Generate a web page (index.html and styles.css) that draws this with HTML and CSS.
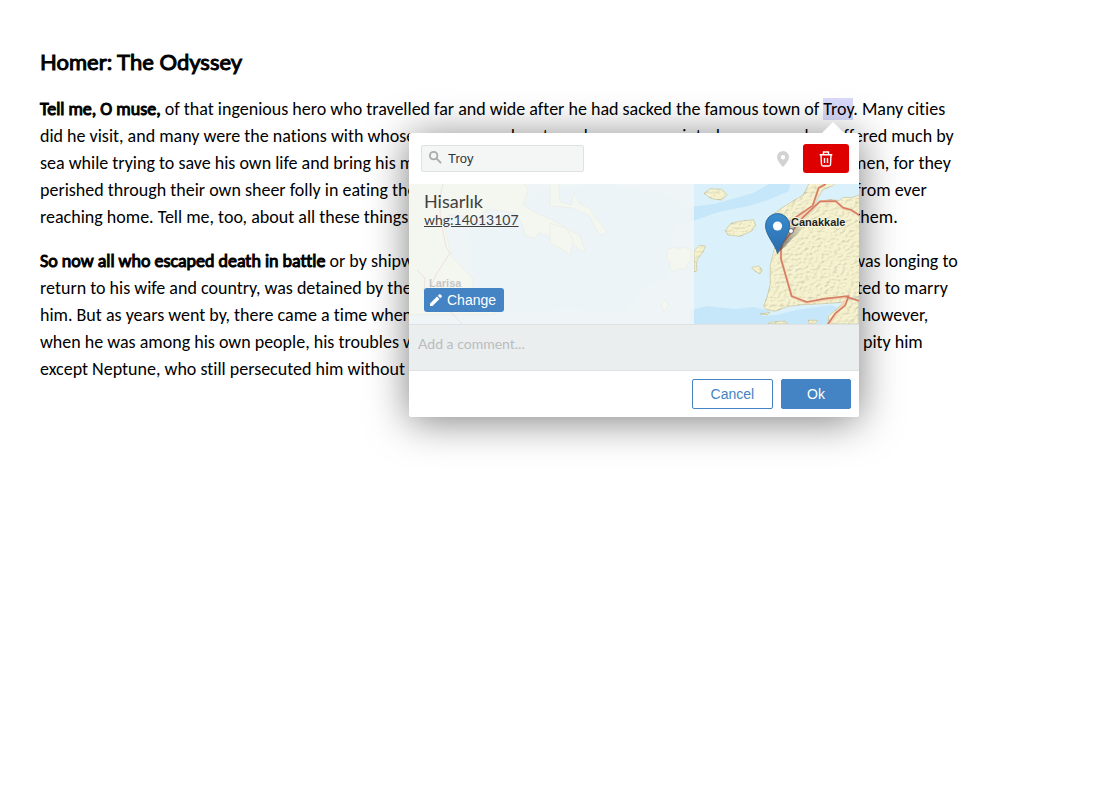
FILE: index.html
```html
<!DOCTYPE html>
<html lang="en">
<head>
<meta charset="utf-8">
<title>Homer: The Odyssey</title>
<link rel="stylesheet" href="styles.css">
</head>
<body>
<main class="page">
  <article class="content">
    <h1>Homer: The Odyssey</h1>
    <p><strong>Tell me, O muse,</strong> of that ingenious hero who travelled far and wide after he had sacked the famous town of <span class="annotation">Troy</span>. Many cities did he visit, and many were the nations with whose manners and customs he was acquainted; moreover he suffered much by sea while trying to save his own life and bring his men safely home; but do what he might he could not save his men, for they perished through their own sheer folly in eating the cattle of the Sun-god Hyperion; so the god prevented them from ever reaching home. Tell me, too, about all these things, O daughter of Jove, from whatsoever source you may know them.</p>
    <p><strong>So now all who escaped death in battle</strong> or by shipwreck had got safely home except Ulysses, and he, though he was longing to return to his wife and country, was detained by the goddess Calypso, who had got him into a large cave and wanted to marry him. But as years went by, there came a time when the gods settled that he should go back to Ithaca; even then, however, when he was among his own people, his troubles were not yet over; nevertheless all the gods had now begun to pity him except Neptune, who still persecuted him without ceasing and would not let him get home.</p>
  </article>

  <section class="editor" aria-label="Annotation editor">
    <header class="toolbar">
      <div class="search">
        <svg class="search-icon" viewBox="0 0 14 14" aria-hidden="true"><circle cx="5" cy="5" r="4"/><path d="M8 8l5 5"/></svg>
        <input type="text" value="Troy" aria-label="Search place">
      </div>
      <div class="tools">
        <button type="button" class="pin-btn" aria-label="Place">
          <svg viewBox="0 0 12 16" aria-hidden="true"><path fill-rule="evenodd" d="M6 0a6 6 0 0 0-6 6c0 4 6 10 6 10s6-6 6-10a6 6 0 0 0-6-6zm0 4a2.200 2.200 0 1 1 0 4.400 2.200 2.200 0 0 1 0-4.400z"/></svg>
        </button>
        <button type="button" class="delete-btn" aria-label="Delete">
          <svg viewBox="0 0 14 16" aria-hidden="true"><path d="M.7 3.700h12.600M4.500 3.500V1h5v2.500M2 3.900l.5 9.600q.1 1.500 1.600 1.500h5.800q1.500 0 1.600-1.500l.5-9.600M5.500 7v5M8.500 7v5"/></svg>
        </button>
      </div>
    </header>

    <div class="place">
      <svg class="map" viewBox="0 0 450 140" preserveAspectRatio="xMaxYMid slice" role="img" aria-label="Map of the northern Aegean">
        <defs>
          <linearGradient id="marker" x1="0" y1="0" x2="0" y2="1"><stop offset="0" stop-color="#398bcd"/><stop offset="1" stop-color="#2a6cac"/></linearGradient>
          <linearGradient id="shade" x1="0" y1="1" x2="1" y2="0"><stop offset="0" stop-color="#333" stop-opacity=".65"/><stop offset="1" stop-color="#333" stop-opacity="0"/></linearGradient>
          <filter id="relief" x="0" y="0" width="1" height="1" color-interpolation-filters="sRGB">
            <feTurbulence type="fractalNoise" baseFrequency=".08 .13" numOctaves="3" seed="8" result="noise"/>
            <feDiffuseLighting in="noise" surfaceScale="1.800" diffuseConstant="1.090" lighting-color="#fffef4" result="light"><feDistantLight azimuth="220" elevation="66"/></feDiffuseLighting>
            <feComposite in="light" in2="SourceAlpha" operator="in" result="cut"/>
            <feBlend in="SourceGraphic" in2="cut" mode="multiply"/>
          </filter>
        </defs>
        <rect width="450" height="140" fill="#daf1fb"/>
        <path fill="#c6e7f9" d="M281 23l24-3 39-11 20-11 18-3-2 12-18 8-22 7-30 6-29 10z"/>
        <path fill="#d0ebf8" d="M60 35l40-5 35-25 60-5 60 10 26 17v12l-16 3-4 50-25 10-20 28-60-5-40 5-50-5z"/>
        <path fill="#c6e7f9" d="M281 126l17-4 28 3 18-2 17 4-8 5 14-1 20-5 35-5 10 4-8 15H281z"/>
        <g class="land" transform="translate(-9 -4) scale(.3333)">
          <path d="M20 0H365l20 30-15 45 40 25 50 20 35 22 45 25 17 48-20-4-25-30-50-5-45-18-12 18-30-10-4-24-25-42-45-8-38-4-24 20 10 20-30-5-30-15-40-5-18 18 5 30 10 40 10 40 60 60 5 35 30 30 15 28 14 12 5 8H20z"/>
        </g>
        <g class="land" transform="translate(141 -4) scale(.3333)">
          <path d="M0 0h25l5 65 35 10 5-38 20 35 28 12 20 30 32 38-15 15-18-20-18-38-52-25L0 78zM0 130l50 15 20 35-10 48-15-15L0 190zM354 208l20-6 14 5 18-6 16 8 3 28-10 12-8 20-20-3-14 9-16-12 4-18-12-10z"/><path d="M332 372l15-13 10 17-16 20z"/>
        </g>
        <g transform="translate(281 -4) scale(.3333)">
          <g class="land" filter="url(#relief)">
            <path d="M42 40l18-14 35 2 17 16-18 16-30-4zM105 152l18-22 30-7 38-4 6 16-12 18-35 16-36-4zM12 212l16-16 18 2-6 17-16 20-5 17 2 20-9 4zM185 262l22-4 10 12-7 12-15-8zM253 100l22-16 27-17 38-22 22-45h82l-14 16-32 14-16 28-12 26-36 26-32 14-35-14zM298 152l46-38 29-26 20-24 27-6 26 4 15-10 24 1 27-10v306l-26 3-30 15-70 5-49 2-42 5-40 15-28-6-6-10 9-24 11-42-1-54 12-48 14-45 20-32zM505 352v80h-88l-2-24 28-23 20-21zM355 420l28 1-8 11h-18zM238 427l45-4 12 9h-60zM210 402l30-5-8 7z"/>
          </g>
          <path class="road halo" d="M405 10l-20 14-17 57-67 50-28 71v35l32 110 45 22 55-10 71-8-65 90M278 190l60-77 52-48 47-1 22 22 25 5 25 16"/>
          <path class="road" d="M408 12l-22 12-18 53-67 46-28 82v32l32 112 45 17 55-10 71-8-10 28-30 24-24 35M278 190l60-77 52-49 47-1 22 20 25 7 25 16M462 348l45 15"/>
        </g>
        <g class="road faint"><path d="M34 0q-6 20-1 43l4 20 4 6-13 20-7 15M8 86l8 8-1 14 11 8 19 15 8 9"/></g>
        <text x="20" y="103" class="label muted">Larisa</text>
        <path fill="url(#shade)" d="M369 69l3-18q10-15 25-14-4 10-13 17z"/>
        <circle cx="382" cy="47" r="2.500" fill="#fff" stroke="#666"/>
        <text x="382" y="42" class="label halo-text">Canakkale</text>
        <path fill="url(#marker)" stroke="#2e6c9f" d="M368.500 69.500c-2-9-12-18-12-28a12 12 0 0 1 24 0c0 10-9 18-12 28z"/>
        <circle cx="368.500" cy="42" r="4.600" fill="#fff"/>
      </svg>
      <div class="details">
        <div class="name">
          <h2>Hisarlık</h2>
          <a href="#whg:14013107">whg:14013107</a>
        </div>
        <button type="button" class="change-btn">
          <svg viewBox="0 0 12 12" aria-hidden="true"><path d="M0 9.500V12h2.500l7-7L7 2.500zM7.800 1.700l2.500 2.500 1.300-1.300q.7-.7 0-1.300L10.400.4q-.6-.7-1.300 0z"/></svg>
          Change
        </button>
      </div>
    </div>

    <textarea class="comment" rows="1" placeholder="Add a comment..." aria-label="Comment"></textarea>

    <footer class="actions">
      <button type="button" class="cancel">Cancel</button>
      <button type="button" class="ok">Ok</button>
    </footer>
  </section>
</main>
</body>
</html>
```
FILE: styles.css
```css
* {
  box-sizing: border-box;
}

body {
  margin: 0;
  background: #fff;
  color: #000;
  font-family: Lato, "Liberation Sans", sans-serif;
  font-variant-ligatures: none;
}

button,
input {
  font-family: "Liberation Sans", Arial, sans-serif;
}

.page {
  position: relative;
  min-height: 100vh;
  padding: 45px 40px;
}

.content {
  max-width: 920px;
  font-family: Carlito, Lato, "Liberation Sans", sans-serif;
  font-size: 18px;
  line-height: 27px;
}

.content h1 {
  margin: 0 0 18px;
  font-family: Lato, "Liberation Sans", sans-serif;
  font-size: 22px;
  line-height: 33px;
  font-weight: 400;
  -webkit-text-stroke: 1px #000;
}

.content p {
  margin: 0 0 17px;
}

.content strong {
  font-weight: 400;
  font-variant-ligatures: none;
  -webkit-text-stroke: 1px #000;
}

.annotation {
  background: #d9d9fb;
}

.editor {
  position: absolute;
  top: 133px;
  left: 409px;
  width: 450px;
  border-radius: 2px;
  background: #fff;
  box-shadow: 0 4px 40px rgba(0, 0, 0, 0.5);
}

.editor::before {
  content: "";
  position: absolute;
  right: 15px;
  bottom: 100%;
  border: 11px solid transparent;
  border-top: 0;
  border-bottom-color: #fff;
}

.toolbar {
  display: flex;
  align-items: center;
  justify-content: space-between;
  padding: 11px 10px 11px 12px;
}

.search {
  display: flex;
  align-items: center;
  width: 163px;
  height: 27px;
  padding: 0 7px;
  gap: 6px;
  border: 1px solid #dfe2e3;
  border-radius: 2px;
  background: #f4f6f6;
}

.search-icon {
  flex: none;
  width: 13px;
  height: 13px;
  margin-bottom: 3px;
  fill: none;
  stroke: #aaa;
  stroke-width: 2;
}

.search input {
  flex: 1;
  min-width: 0;
  padding: 0;
  border: 0;
  outline: 0;
  background: none;
  color: #333;
  font-size: 13px;
}

.tools {
  display: flex;
  align-items: center;
  gap: 14px;
}

.pin-btn {
  display: flex;
  padding: 0;
  border: 0;
  background: none;
}

.pin-btn svg {
  width: 12px;
  height: 16px;
  fill: #d2d2d2;
}

.delete-btn {
  display: flex;
  align-items: center;
  justify-content: center;
  width: 46px;
  height: 29px;
  padding: 0;
  border: 0;
  border-radius: 3px;
  background: #de0000;
}

.delete-btn svg {
  width: 14px;
  height: 16px;
  fill: none;
  stroke: #fff;
  stroke-width: 1.4;
}

.place {
  display: grid;
  height: 140px;
}

.map,
.details {
  grid-area: 1 / 1;
}

.map {
  display: block;
  width: 100%;
  height: 140px;
}

.land {
  fill: #f5f2d6;
  stroke: #b9bea2;
  stroke-width: 2;
}

.road {
  fill: none;
  stroke: #d57d65;
  stroke-width: 5;
  stroke-linejoin: round;
}

.road.halo {
  stroke: #f3d7b5;
  stroke-width: 8;
}

.road.faint {
  stroke: #dd8a80;
  stroke-width: 1;
}

.label {
  font: bold 11px "Liberation Sans", Arial, sans-serif;
  fill: #222;
}

.label.muted {
  fill: #000;
}

.halo-text {
  paint-order: stroke;
  stroke: #f8f5dc;
  stroke-width: 2;
}

.details {
  position: relative;
  display: flex;
  flex-direction: column;
  align-items: flex-start;
  justify-content: space-between;
  width: 285px;
  padding: 7px 15px 12px;
  background: rgba(244, 246, 246, 0.8);
  color: #3f3f3f;
}

.name {
  display: flex;
  flex-direction: column;
}

.details h2 {
  margin: 0;
  font-size: 18px;
  line-height: 20px;
  font-weight: 400;
}

.details a {
  color: #3f3f3f;
  font-size: 14px;
  line-height: 18px;
}

.change-btn {
  display: flex;
  align-items: center;
  gap: 5px;
  height: 24px;
  padding: 0 8px 0 6px;
  border: 0;
  border-radius: 3px;
  background: #4483c4;
  color: #fff;
  font-size: 14px;
}

.change-btn svg {
  width: 12px;
  height: 12px;
  fill: #fff;
}

.comment {
  display: block;
  width: 100%;
  height: 47px;
  padding: 10px 9px;
  border: solid #dfe2e3;
  border-width: 1px 0;
  outline: 0;
  resize: none;
  background: #ebeeef;
  font: 14px/18px Lato, "Liberation Sans", sans-serif;
}

.comment::placeholder {
  color: #b9bcbe;
}

.actions {
  display: flex;
  justify-content: flex-end;
  gap: 8px;
  padding: 8px;
}

.actions button {
  height: 30px;
  border: 1px solid #4483c4;
  border-radius: 2px;
  font-size: 14px;
}

.cancel {
  padding: 0 18px;
  background: #fff;
  color: #4483c4;
}

.ok {
  padding: 0 25px;
  background: #4483c4;
  color: #fff;
}
```
